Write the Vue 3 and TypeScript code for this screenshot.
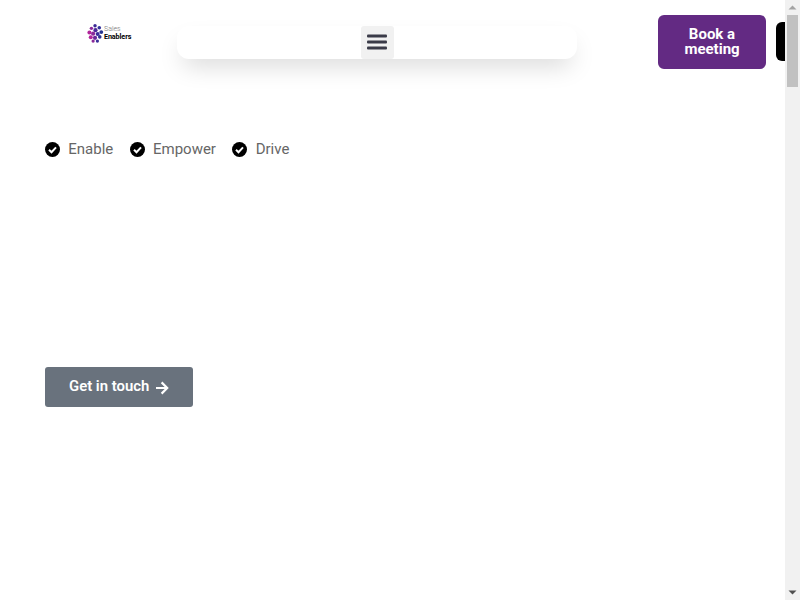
<script setup lang="ts">
const points: string[] = ['Enable', 'Empower', 'Drive']
const dots: { x: number; y: number; r: number; c: string }[] = [
  { x: 8, y: 1.9, r: 1.8, c: '#3c2a96' },
  { x: 12.5, y: 4, r: 1.9, c: '#33309a' },
  { x: 4.2, y: 4.6, r: 1.8, c: '#8a2a9a' },
  { x: 8.5, y: 6.5, r: 2.2, c: '#4a2a9a' },
  { x: 14.6, y: 8.5, r: 2, c: '#26348f' },
  { x: 2.1, y: 9, r: 2.1, c: '#b0259a' },
  { x: 6, y: 10.2, r: 2.2, c: '#8a2a9a' },
  { x: 10.8, y: 10.5, r: 2.1, c: '#3a2f9a' },
  { x: 3.5, y: 14, r: 2.1, c: '#b0279a' },
  { x: 8, y: 14.6, r: 2.2, c: '#6a2a9a' },
  { x: 13, y: 13.6, r: 1.9, c: '#2f3494' },
  { x: 6, y: 18, r: 1.7, c: '#8a2a9a' },
  { x: 10.5, y: 18, r: 1.7, c: '#3a2f9a' }
]
</script>

<template>
  <div class="window">
    <div class="page">
      <header class="header">
        <a class="logo" href="#">
          <svg class="logo-mark" width="17" height="19" viewBox="0 0 17 20" aria-hidden="true">
            <circle v-for="(d, i) in dots" :key="i" :cx="d.x" :cy="d.y" :r="d.r" :fill="d.c" />
          </svg>
          <span class="logo-text">
            <span class="logo-sales">Sales</span>
            <span class="logo-enablers">Enablers</span>
          </span>
        </a>
        <nav class="nav-card">
          <button class="menu-btn" type="button" aria-label="Menu">
            <svg width="20" height="18" viewBox="0 0 20 18" aria-hidden="true">
              <rect x="0" y="1.5" width="20" height="3" rx="1" />
              <rect x="0" y="7.5" width="20" height="3" rx="1" />
              <rect x="0" y="13.5" width="20" height="3" rx="1" />
            </svg>
          </button>
        </nav>
        <a class="book" href="#">Book a meeting</a>
        <a class="black-btn" href="#"></a>
      </header>

      <main class="hero">
        <ul class="points">
          <li v-for="p in points" :key="p" class="point">
            <svg width="15" height="15" viewBox="0 0 15 15" aria-hidden="true">
              <circle cx="7.5" cy="7.5" r="7.5" fill="#000" />
              <path d="M4 7.8l2.5 2.5L11 5.4" fill="none" stroke="#fff" stroke-width="2" />
            </svg>
            <span>{{ p }}</span>
          </li>
        </ul>
        <a class="cta" href="#">
          <span>Get in touch</span>
          <svg class="cta-arrow" width="14" height="14" viewBox="0 0 14 14" aria-hidden="true">
            <path d="M1 7h11M6.6 1.4L12.2 7 6.6 12.6" fill="none" stroke="#fff" stroke-width="2.2" />
          </svg>
        </a>
      </main>
    </div>

    <div class="scrollbar" aria-hidden="true">
      <svg class="arrow" width="15" height="15" viewBox="0 0 15 15">
        <path d="M3.5 9.5L7.5 5.5 11.5 9.5z" fill="#a3a3a3" />
      </svg>
      <div class="track"><div class="thumb"></div></div>
      <svg class="arrow" width="15" height="15" viewBox="0 0 15 15">
        <path d="M3.5 5.5L7.5 9.5 11.5 5.5z" fill="#505050" />
      </svg>
    </div>
  </div>
</template>

<style>
html,
body {
  margin: 0;
  background: #fff;
}
</style>

<style scoped>
.window {
  display: flex;
  width: 800px;
  height: 600px;
  overflow: hidden;
  font-family: Roboto, "Liberation Sans", sans-serif;
}
.page {
  flex: none;
  width: 785px;
  overflow: hidden;
}
.scrollbar {
  flex: none;
  display: flex;
  flex-direction: column;
  width: 15px;
  background: #f1f1f1;
}
.arrow {
  flex: none;
  display: block;
}
.track {
  flex: 1;
  padding: 0 2px;
}
.thumb {
  height: 72px;
  background: #c1c1c1;
}
.header {
  display: flex;
  align-items: center;
  height: 54px;
  padding: 15px 0 15px 87px;
}
.logo {
  display: flex;
  align-items: center;
  width: 90px;
  flex: none;
  margin-bottom: 18px;
  text-decoration: none;
}
.logo-mark {
  flex: none;
}
.logo-text {
  display: flex;
  flex-direction: column;
  line-height: 8.5px;
}
.logo-sales {
  font-size: 7px;
  font-weight: 300;
  color: #777;
}
.logo-enablers {
  font-size: 7.2px;
  font-weight: 700;
  color: #000;
  letter-spacing: -0.1px;
}
.nav-card {
  flex: none;
  display: flex;
  justify-content: center;
  width: 400px;
  height: 33px;
  background: #fff;
  border-radius: 12px;
  box-shadow: 0 12px 24px -6px rgba(0, 0, 0, 0.17);
}
.menu-btn {
  display: flex;
  align-items: center;
  justify-content: center;
  width: 33px;
  height: 33px;
  padding: 0;
  border: 0;
  border-radius: 3px;
  background: #f1f1f1;
  fill: #3a3b48;
}
.book {
  flex: none;
  box-sizing: border-box;
  display: flex;
  align-items: center;
  justify-content: center;
  width: 108px;
  height: 54px;
  margin-left: 81px;
  padding: 0 20px;
  border-radius: 6px;
  background: #632a83;
  color: #fff;
  font-size: 15px;
  font-weight: 700;
  line-height: 15px;
  text-align: center;
  text-decoration: none;
}
.black-btn {
  flex: none;
  width: 60px;
  height: 39px;
  margin: -1px 0 0 10px;
  border-radius: 6px;
  background: #000;
}
.hero {
  padding: 0 45px;
}
.points {
  display: flex;
  gap: 16.4px;
  margin: 0;
  padding: 53px 0 0;
  list-style: none;
}
.point {
  display: flex;
  align-items: center;
  gap: 8.3px;
  height: 24px;
  color: #666;
  font-size: 15px;
}
.cta {
  display: inline-flex;
  align-items: center;
  gap: 5.5px;
  box-sizing: border-box;
  width: 148px;
  height: 40px;
  margin-top: 206px;
  padding: 0 24px 2px;
  border-radius: 3px;
  background: #69727d;
  color: #fff;
  font-size: 14.9px;
  font-weight: 600;
  white-space: nowrap;
  text-decoration: none;
}
.cta-arrow {
  flex: none;
  margin-top: 4px;
}
</style>
